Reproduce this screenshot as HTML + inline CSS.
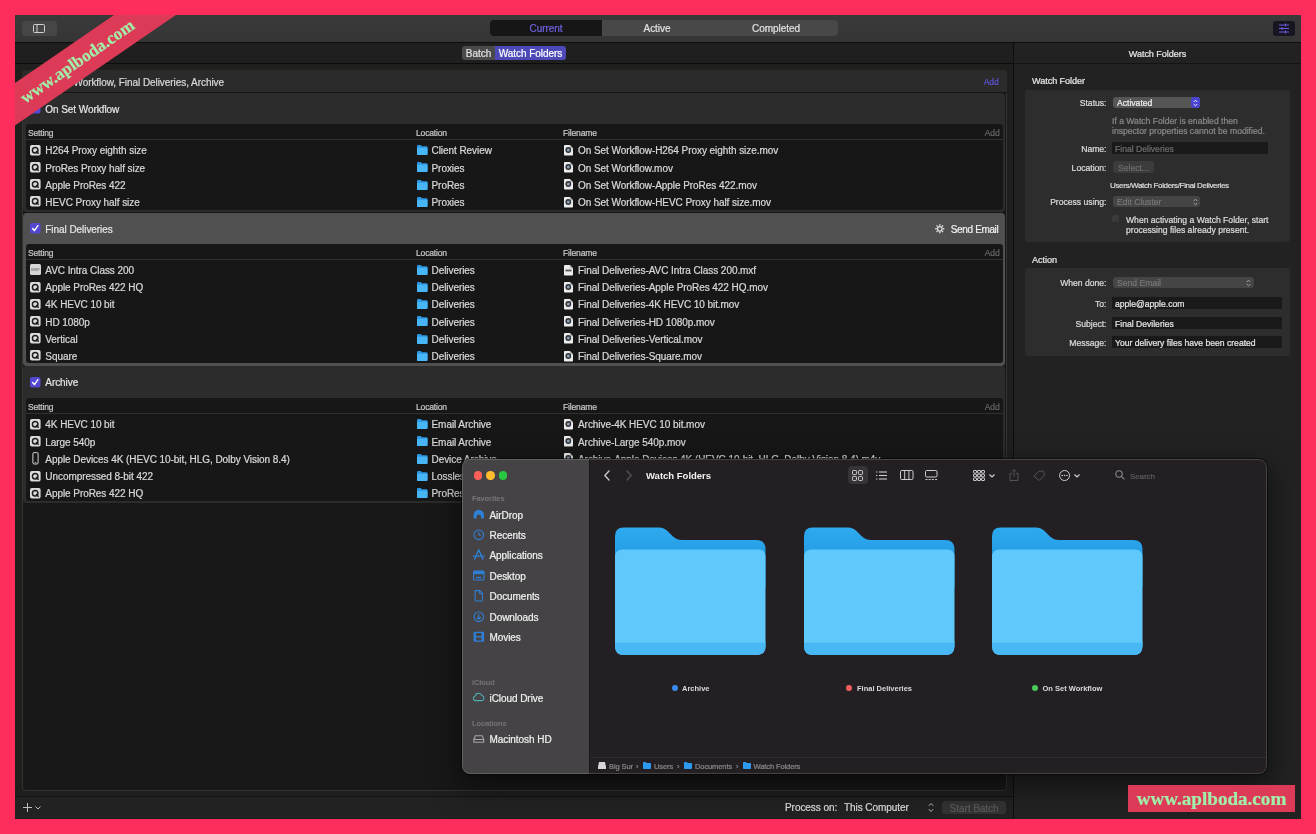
<!DOCTYPE html>
<html><head><meta charset="utf-8"><title>Watch Folders</title>
<style>
html,body{margin:0;padding:0}
body{width:1316px;height:834px;overflow:hidden;position:relative;background:#ff2d5b;font-family:"Liberation Sans",sans-serif;font-size:10px;letter-spacing:-0.06px;color:#d8d8d8;-webkit-text-stroke:0.22px}
.a{position:absolute;white-space:nowrap}
.t{position:absolute;white-space:nowrap;line-height:14px;height:14px;margin-top:1.3px}
.sm{font-size:8.6px;letter-spacing:0;margin-top:0.6px}
.hd{font-size:8.5px;letter-spacing:-0.15px;color:#c8c8c8}
svg{position:absolute;overflow:visible}
</style></head><body>
<div style="position:absolute;left:0;top:0;width:1316px;height:834px;will-change:transform">

<div class="a" style="left:15px;top:15px;width:1286px;height:803.5px;background:#1f1f1f"></div>
<div class="a" style="left:15px;top:15px;width:1286px;height:27px;background:linear-gradient(#3a3a3a,#353535)"></div>
<div class="a" style="left:15px;top:42px;width:1286px;height:1px;background:#0e0e0e"></div>
<div class="a" style="left:15px;top:43px;width:1286px;height:20px;background:#1f1f1f"></div>
<div class="a" style="left:15px;top:63px;width:1286px;height:1px;background:#0c0c0c"></div>
<div class="a" style="left:22px;top:21px;width:35px;height:15px;background:#464646;border-radius:3px"></div>
<svg style="left:33px;top:24px" width="12" height="9" viewBox="0 0 12 9"><rect x="0.5" y="0.5" width="11" height="8" rx="1" fill="none" stroke="#d0d0d0" stroke-width="1"/><line x1="4" y1="0.5" x2="4" y2="8.5" stroke="#d0d0d0" stroke-width="1"/></svg>
<div class="a" style="left:490px;top:20px;width:348px;height:16px;background:#484848;border-radius:4px"></div>
<div class="a" style="left:490px;top:20px;width:112px;height:16px;background:#161616;border-radius:4px 0 0 4px"></div>
<div class="t" style="left:490px;top:21px;width:112px;text-align:center;color:#6e62e0">Current</div>
<div class="t" style="left:602px;top:21px;width:110px;text-align:center;color:#e0e0e0">Active</div>
<div class="t" style="left:716px;top:21px;width:120px;text-align:center;color:#e0e0e0">Completed</div>
<div class="a" style="left:1273px;top:21px;width:22px;height:15px;background:#17151f;border-radius:3px"></div>
<svg style="left:1279px;top:23px" width="10" height="11" viewBox="0 0 10 11"><g stroke="#6a5fe0" stroke-width="1" fill="none"><line x1="0" y1="2" x2="10" y2="2"/><line x1="0" y1="5.5" x2="10" y2="5.5"/><line x1="0" y1="9" x2="10" y2="9"/><line x1="6.5" y1="0.5" x2="6.5" y2="3.5"/><line x1="3" y1="4" x2="3" y2="7"/><line x1="6.5" y1="7.5" x2="6.5" y2="10.5"/></g></svg>
<div class="a" style="left:462px;top:46px;width:34px;height:14px;background:#4a4a4a;border-radius:3px 0 0 3px"></div>
<div class="a" style="left:495px;top:46px;width:71px;height:14px;background:#4d49b8;border-radius:0 3px 3px 0"></div>
<div class="t" style="left:462px;top:46px;width:33px;text-align:center;color:#e0e0e0">Batch</div>
<div class="t" style="left:495px;top:46px;width:71px;text-align:center;color:#ffffff">Watch Folders</div>
<div class="a" style="left:15px;top:64px;width:998px;height:733px;background:#1f201e"></div>
<div class="a" style="left:21.5px;top:70px;width:985.5px;height:721px;background:#181818;border:1px solid #343434;box-sizing:border-box;border-radius:4px"></div>
<div class="a" style="left:22px;top:70px;width:985px;height:22.5px;background:#2b2b2b;border-radius:4px 4px 0 0"></div>
<div class="a" style="left:22px;top:92px;width:985px;height:1px;background:#151515"></div>
<div class="t" style="left:24px;top:74.500px;width:200px;text-align:right;color:#d8d8d8">On Set Workflow, Final Deliveries, Archive</div>
<div class="t hd" style="left:960px;top:73.500px;width:38.500px;text-align:right;color:#5f54d4">Add</div>
<div class="a" style="left:22.5px;top:93px;width:982.2px;height:118.5px;background:#2c2c2c;border-radius:4px"></div>
<svg style="left:30.4px;top:103.25px" width="10.500" height="10.500" viewBox="0 0 9 9"><rect x="0" y="0" width="9" height="9" rx="1.800" fill="#5448d2"/><path d="M2.2 4.7L3.8 6.5L6.8 2.3" fill="none" stroke="#fff" stroke-width="1.2" stroke-linecap="round" stroke-linejoin="round"/></svg>
<div class="t" style="left:45.3px;top:101.5px;color:#e4e4e4">On Set Workflow</div>

<div class="a" style="left:25.5px;top:124px;width:977.5px;height:85.5px;background:#171717;border-radius:3px"></div>
<div class="t hd" style="left:28px;top:124.3px">Setting</div>
<div class="t hd" style="left:416px;top:124.3px">Location</div>
<div class="t hd" style="left:563px;top:124.3px">Filename</div>
<div class="t hd" style="left:960px;top:124.3px;width:39.5px;text-align:right;color:#646464">Add</div>
<div class="a" style="left:25.5px;top:139.3px;width:977.5px;height:1px;background:#303030"></div>
<svg style="left:29.9px;top:144.79999999999998px" width="10.600" height="10.600" viewBox="0 0 11 11"><rect x="0" y="0" width="11" height="11" rx="1.800" fill="#dcdcdc"/><circle cx="5.4" cy="5.4" r="2.9" fill="none" stroke="#1c1c1c" stroke-width="1.5"/><line x1="6.3" y1="6.3" x2="9" y2="9" stroke="#1c1c1c" stroke-width="1.5"/></svg>
<div class="t" style="left:45.3px;top:143.1px">H264 Proxy eighth size</div>
<svg style="left:416.7px;top:145.1px" width="10.5" height="10" viewBox="0 0 10.5 10"><path d="M0 1Q0 0 1 0H3.8L4.9 1.2H9.5Q10.5 1.2 10.5 2.2V9Q10.5 10 9.5 10H1Q0 10 0 9Z" fill="#2a96e4"/><path d="M0 2.8H10.5V9Q10.5 10 9.5 10H1Q0 10 0 9Z" fill="#48b6f6"/></svg>
<div class="t" style="left:431.5px;top:143.1px">Client Review</div>
<svg style="left:564.3px;top:144.9px" width="9" height="10.5" viewBox="0 0 9 10.5"><path d="M0 0.800Q0 0 0.800 0H5.800L9 3.200V9.700Q9 10.500 8.200 10.500H0.800Q0 10.500 0 9.700Z" fill="#ececec"/><path d="M5.800 0V3.200H9Z" fill="#b9b9b9"/><circle cx="4.300" cy="5" r="2.900" fill="#2e3236"/><circle cx="4.300" cy="5" r="1.500" fill="#8fa2b4"/></svg>
<div class="t" style="left:578px;top:143.1px">On Set Workflow-H264 Proxy eighth size.mov</div>
<svg style="left:29.9px;top:162.0px" width="10.600" height="10.600" viewBox="0 0 11 11"><rect x="0" y="0" width="11" height="11" rx="1.800" fill="#dcdcdc"/><circle cx="5.4" cy="5.4" r="2.9" fill="none" stroke="#1c1c1c" stroke-width="1.5"/><line x1="6.3" y1="6.3" x2="9" y2="9" stroke="#1c1c1c" stroke-width="1.5"/></svg>
<div class="t" style="left:45.3px;top:160.3px">ProRes Proxy half size</div>
<svg style="left:416.7px;top:162.3px" width="10.5" height="10" viewBox="0 0 10.5 10"><path d="M0 1Q0 0 1 0H3.8L4.9 1.2H9.5Q10.5 1.2 10.5 2.2V9Q10.5 10 9.5 10H1Q0 10 0 9Z" fill="#2a96e4"/><path d="M0 2.8H10.5V9Q10.5 10 9.5 10H1Q0 10 0 9Z" fill="#48b6f6"/></svg>
<div class="t" style="left:431.5px;top:160.3px">Proxies</div>
<svg style="left:564.3px;top:162.10000000000002px" width="9" height="10.5" viewBox="0 0 9 10.5"><path d="M0 0.800Q0 0 0.800 0H5.800L9 3.200V9.700Q9 10.500 8.200 10.500H0.800Q0 10.500 0 9.700Z" fill="#ececec"/><path d="M5.800 0V3.200H9Z" fill="#b9b9b9"/><circle cx="4.300" cy="5" r="2.900" fill="#2e3236"/><circle cx="4.300" cy="5" r="1.500" fill="#8fa2b4"/></svg>
<div class="t" style="left:578px;top:160.3px">On Set Workflow.mov</div>
<svg style="left:29.9px;top:179.2px" width="10.600" height="10.600" viewBox="0 0 11 11"><rect x="0" y="0" width="11" height="11" rx="1.800" fill="#dcdcdc"/><circle cx="5.4" cy="5.4" r="2.9" fill="none" stroke="#1c1c1c" stroke-width="1.5"/><line x1="6.3" y1="6.3" x2="9" y2="9" stroke="#1c1c1c" stroke-width="1.5"/></svg>
<div class="t" style="left:45.3px;top:177.5px">Apple ProRes 422</div>
<svg style="left:416.7px;top:179.5px" width="10.5" height="10" viewBox="0 0 10.5 10"><path d="M0 1Q0 0 1 0H3.8L4.9 1.2H9.5Q10.5 1.2 10.5 2.2V9Q10.5 10 9.5 10H1Q0 10 0 9Z" fill="#2a96e4"/><path d="M0 2.8H10.5V9Q10.5 10 9.5 10H1Q0 10 0 9Z" fill="#48b6f6"/></svg>
<div class="t" style="left:431.5px;top:177.5px">ProRes</div>
<svg style="left:564.3px;top:179.3px" width="9" height="10.5" viewBox="0 0 9 10.5"><path d="M0 0.800Q0 0 0.800 0H5.800L9 3.200V9.700Q9 10.500 8.200 10.500H0.800Q0 10.500 0 9.700Z" fill="#ececec"/><path d="M5.800 0V3.200H9Z" fill="#b9b9b9"/><circle cx="4.300" cy="5" r="2.900" fill="#2e3236"/><circle cx="4.300" cy="5" r="1.500" fill="#8fa2b4"/></svg>
<div class="t" style="left:578px;top:177.5px">On Set Workflow-Apple ProRes 422.mov</div>
<svg style="left:29.9px;top:196.39999999999998px" width="10.600" height="10.600" viewBox="0 0 11 11"><rect x="0" y="0" width="11" height="11" rx="1.800" fill="#dcdcdc"/><circle cx="5.4" cy="5.4" r="2.9" fill="none" stroke="#1c1c1c" stroke-width="1.5"/><line x1="6.3" y1="6.3" x2="9" y2="9" stroke="#1c1c1c" stroke-width="1.5"/></svg>
<div class="t" style="left:45.3px;top:194.7px">HEVC Proxy half size</div>
<svg style="left:416.7px;top:196.7px" width="10.5" height="10" viewBox="0 0 10.5 10"><path d="M0 1Q0 0 1 0H3.8L4.9 1.2H9.5Q10.5 1.2 10.5 2.2V9Q10.5 10 9.5 10H1Q0 10 0 9Z" fill="#2a96e4"/><path d="M0 2.8H10.5V9Q10.5 10 9.5 10H1Q0 10 0 9Z" fill="#48b6f6"/></svg>
<div class="t" style="left:431.5px;top:194.7px">Proxies</div>
<svg style="left:564.3px;top:196.5px" width="9" height="10.5" viewBox="0 0 9 10.5"><path d="M0 0.800Q0 0 0.800 0H5.800L9 3.200V9.700Q9 10.500 8.200 10.500H0.800Q0 10.500 0 9.700Z" fill="#ececec"/><path d="M5.800 0V3.200H9Z" fill="#b9b9b9"/><circle cx="4.300" cy="5" r="2.900" fill="#2e3236"/><circle cx="4.300" cy="5" r="1.500" fill="#8fa2b4"/></svg>
<div class="t" style="left:578px;top:194.7px">On Set Workflow-HEVC Proxy half size.mov</div>
<div class="a" style="left:22.5px;top:213px;width:982.2px;height:152.5px;background:#505050;border-radius:4px"></div>
<svg style="left:30.4px;top:223.35px" width="10.500" height="10.500" viewBox="0 0 9 9"><rect x="0" y="0" width="9" height="9" rx="1.800" fill="#5448d2"/><path d="M2.2 4.7L3.8 6.5L6.8 2.3" fill="none" stroke="#fff" stroke-width="1.2" stroke-linecap="round" stroke-linejoin="round"/></svg>
<div class="t" style="left:45.3px;top:221.6px;color:#e4e4e4">Final Deliveries</div>
<svg style="left:934.7px;top:223.8px" width="9.6" height="9.6" viewBox="0 0 11 11"><g fill="none" stroke="#e0e0e0"><circle cx="5.5" cy="5.5" r="2.6" stroke-width="1.4"/><g stroke-width="1.6"><line x1="5.5" y1="0.3" x2="5.5" y2="2"/><line x1="5.5" y1="9" x2="5.5" y2="10.7"/><line x1="0.3" y1="5.5" x2="2" y2="5.5"/><line x1="9" y1="5.5" x2="10.7" y2="5.5"/><line x1="1.8" y1="1.8" x2="3" y2="3"/><line x1="8" y1="8" x2="9.2" y2="9.2"/><line x1="1.8" y1="9.2" x2="3" y2="8"/><line x1="8" y1="3" x2="9.2" y2="1.8"/></g></g></svg><div class="t" style="left:950.8px;top:222.2px;color:#f0f0f0;letter-spacing:-0.36px">Send Email</div>
<div class="a" style="left:25.5px;top:244.2px;width:977.5px;height:119.30000000000001px;background:#171717;border-radius:3px"></div>
<div class="t hd" style="left:28px;top:244.5px">Setting</div>
<div class="t hd" style="left:416px;top:244.5px">Location</div>
<div class="t hd" style="left:563px;top:244.5px">Filename</div>
<div class="t hd" style="left:960px;top:244.5px;width:39.5px;text-align:right;color:#646464">Add</div>
<div class="a" style="left:25.5px;top:258.7px;width:977.5px;height:1px;background:#303030"></div>
<svg style="left:29.9px;top:264.2px" width="11" height="11" viewBox="0 0 11 11"><rect x="0" y="0" width="11" height="11" rx="1.5" fill="#d6d6d6"/><text x="5.5" y="7.2" font-size="4" font-weight="bold" text-anchor="middle" fill="#777" font-family="Liberation Sans, sans-serif" letter-spacing="0">MXF</text></svg>
<div class="t" style="left:45.3px;top:262.7px">AVC Intra Class 200</div>
<svg style="left:416.7px;top:264.7px" width="10.5" height="10" viewBox="0 0 10.5 10"><path d="M0 1Q0 0 1 0H3.8L4.9 1.2H9.5Q10.5 1.2 10.5 2.2V9Q10.5 10 9.5 10H1Q0 10 0 9Z" fill="#2a96e4"/><path d="M0 2.8H10.5V9Q10.5 10 9.5 10H1Q0 10 0 9Z" fill="#48b6f6"/></svg>
<div class="t" style="left:431.5px;top:262.7px">Deliveries</div>
<svg style="left:564.3px;top:264.5px" width="9" height="10.5" viewBox="0 0 9 10.5"><path d="M0 0.800Q0 0 0.800 0H5.800L9 3.200V9.700Q9 10.500 8.200 10.500H0.800Q0 10.500 0 9.700Z" fill="#ececec"/><path d="M5.800 0V3.200H9Z" fill="#b9b9b9"/><rect x="1.500" y="4.600" width="6" height="1.800" fill="#555"/></svg>
<div class="t" style="left:578px;top:262.7px">Final Deliveries-AVC Intra Class 200.mxf</div>
<svg style="left:29.9px;top:281.59999999999997px" width="10.600" height="10.600" viewBox="0 0 11 11"><rect x="0" y="0" width="11" height="11" rx="1.800" fill="#dcdcdc"/><circle cx="5.4" cy="5.4" r="2.9" fill="none" stroke="#1c1c1c" stroke-width="1.5"/><line x1="6.3" y1="6.3" x2="9" y2="9" stroke="#1c1c1c" stroke-width="1.5"/></svg>
<div class="t" style="left:45.3px;top:279.9px">Apple ProRes 422 HQ</div>
<svg style="left:416.7px;top:281.9px" width="10.5" height="10" viewBox="0 0 10.5 10"><path d="M0 1Q0 0 1 0H3.8L4.9 1.2H9.5Q10.5 1.2 10.5 2.2V9Q10.5 10 9.5 10H1Q0 10 0 9Z" fill="#2a96e4"/><path d="M0 2.8H10.5V9Q10.5 10 9.5 10H1Q0 10 0 9Z" fill="#48b6f6"/></svg>
<div class="t" style="left:431.5px;top:279.9px">Deliveries</div>
<svg style="left:564.3px;top:281.7px" width="9" height="10.5" viewBox="0 0 9 10.5"><path d="M0 0.800Q0 0 0.800 0H5.800L9 3.200V9.700Q9 10.500 8.200 10.500H0.800Q0 10.500 0 9.700Z" fill="#ececec"/><path d="M5.800 0V3.200H9Z" fill="#b9b9b9"/><circle cx="4.300" cy="5" r="2.900" fill="#2e3236"/><circle cx="4.300" cy="5" r="1.500" fill="#8fa2b4"/></svg>
<div class="t" style="left:578px;top:279.9px">Final Deliveries-Apple ProRes 422 HQ.mov</div>
<svg style="left:29.9px;top:298.8px" width="10.600" height="10.600" viewBox="0 0 11 11"><rect x="0" y="0" width="11" height="11" rx="1.800" fill="#dcdcdc"/><circle cx="5.4" cy="5.4" r="2.9" fill="none" stroke="#1c1c1c" stroke-width="1.5"/><line x1="6.3" y1="6.3" x2="9" y2="9" stroke="#1c1c1c" stroke-width="1.5"/></svg>
<div class="t" style="left:45.3px;top:297.1px">4K HEVC 10 bit</div>
<svg style="left:416.7px;top:299.1px" width="10.5" height="10" viewBox="0 0 10.5 10"><path d="M0 1Q0 0 1 0H3.8L4.9 1.2H9.5Q10.5 1.2 10.5 2.2V9Q10.5 10 9.5 10H1Q0 10 0 9Z" fill="#2a96e4"/><path d="M0 2.8H10.5V9Q10.5 10 9.5 10H1Q0 10 0 9Z" fill="#48b6f6"/></svg>
<div class="t" style="left:431.5px;top:297.1px">Deliveries</div>
<svg style="left:564.3px;top:298.90000000000003px" width="9" height="10.5" viewBox="0 0 9 10.5"><path d="M0 0.800Q0 0 0.800 0H5.800L9 3.200V9.700Q9 10.500 8.200 10.500H0.800Q0 10.500 0 9.700Z" fill="#ececec"/><path d="M5.800 0V3.200H9Z" fill="#b9b9b9"/><circle cx="4.300" cy="5" r="2.900" fill="#2e3236"/><circle cx="4.300" cy="5" r="1.500" fill="#8fa2b4"/></svg>
<div class="t" style="left:578px;top:297.1px">Final Deliveries-4K HEVC 10 bit.mov</div>
<svg style="left:29.9px;top:316.0px" width="10.600" height="10.600" viewBox="0 0 11 11"><rect x="0" y="0" width="11" height="11" rx="1.800" fill="#dcdcdc"/><circle cx="5.4" cy="5.4" r="2.9" fill="none" stroke="#1c1c1c" stroke-width="1.5"/><line x1="6.3" y1="6.3" x2="9" y2="9" stroke="#1c1c1c" stroke-width="1.5"/></svg>
<div class="t" style="left:45.3px;top:314.3px">HD 1080p</div>
<svg style="left:416.7px;top:316.3px" width="10.5" height="10" viewBox="0 0 10.5 10"><path d="M0 1Q0 0 1 0H3.8L4.9 1.2H9.5Q10.5 1.2 10.5 2.2V9Q10.5 10 9.5 10H1Q0 10 0 9Z" fill="#2a96e4"/><path d="M0 2.8H10.5V9Q10.5 10 9.5 10H1Q0 10 0 9Z" fill="#48b6f6"/></svg>
<div class="t" style="left:431.5px;top:314.3px">Deliveries</div>
<svg style="left:564.3px;top:316.1px" width="9" height="10.5" viewBox="0 0 9 10.5"><path d="M0 0.800Q0 0 0.800 0H5.800L9 3.200V9.700Q9 10.500 8.200 10.500H0.800Q0 10.500 0 9.700Z" fill="#ececec"/><path d="M5.800 0V3.200H9Z" fill="#b9b9b9"/><circle cx="4.300" cy="5" r="2.900" fill="#2e3236"/><circle cx="4.300" cy="5" r="1.500" fill="#8fa2b4"/></svg>
<div class="t" style="left:578px;top:314.3px">Final Deliveries-HD 1080p.mov</div>
<svg style="left:29.9px;top:333.2px" width="10.600" height="10.600" viewBox="0 0 11 11"><rect x="0" y="0" width="11" height="11" rx="1.800" fill="#dcdcdc"/><circle cx="5.4" cy="5.4" r="2.9" fill="none" stroke="#1c1c1c" stroke-width="1.5"/><line x1="6.3" y1="6.3" x2="9" y2="9" stroke="#1c1c1c" stroke-width="1.5"/></svg>
<div class="t" style="left:45.3px;top:331.5px">Vertical</div>
<svg style="left:416.7px;top:333.5px" width="10.5" height="10" viewBox="0 0 10.5 10"><path d="M0 1Q0 0 1 0H3.8L4.9 1.2H9.5Q10.5 1.2 10.5 2.2V9Q10.5 10 9.5 10H1Q0 10 0 9Z" fill="#2a96e4"/><path d="M0 2.8H10.5V9Q10.5 10 9.5 10H1Q0 10 0 9Z" fill="#48b6f6"/></svg>
<div class="t" style="left:431.5px;top:331.5px">Deliveries</div>
<svg style="left:564.3px;top:333.3px" width="9" height="10.5" viewBox="0 0 9 10.5"><path d="M0 0.800Q0 0 0.800 0H5.800L9 3.200V9.700Q9 10.500 8.200 10.500H0.800Q0 10.500 0 9.700Z" fill="#ececec"/><path d="M5.800 0V3.200H9Z" fill="#b9b9b9"/><circle cx="4.300" cy="5" r="2.900" fill="#2e3236"/><circle cx="4.300" cy="5" r="1.500" fill="#8fa2b4"/></svg>
<div class="t" style="left:578px;top:331.5px">Final Deliveries-Vertical.mov</div>
<svg style="left:29.9px;top:350.4px" width="10.600" height="10.600" viewBox="0 0 11 11"><rect x="0" y="0" width="11" height="11" rx="1.800" fill="#dcdcdc"/><circle cx="5.4" cy="5.4" r="2.9" fill="none" stroke="#1c1c1c" stroke-width="1.5"/><line x1="6.3" y1="6.3" x2="9" y2="9" stroke="#1c1c1c" stroke-width="1.5"/></svg>
<div class="t" style="left:45.3px;top:348.7px">Square</div>
<svg style="left:416.7px;top:350.7px" width="10.5" height="10" viewBox="0 0 10.5 10"><path d="M0 1Q0 0 1 0H3.8L4.9 1.2H9.5Q10.5 1.2 10.5 2.2V9Q10.5 10 9.5 10H1Q0 10 0 9Z" fill="#2a96e4"/><path d="M0 2.8H10.5V9Q10.5 10 9.5 10H1Q0 10 0 9Z" fill="#48b6f6"/></svg>
<div class="t" style="left:431.5px;top:348.7px">Deliveries</div>
<svg style="left:564.3px;top:350.5px" width="9" height="10.5" viewBox="0 0 9 10.5"><path d="M0 0.800Q0 0 0.800 0H5.800L9 3.200V9.700Q9 10.500 8.200 10.500H0.800Q0 10.500 0 9.700Z" fill="#ececec"/><path d="M5.800 0V3.200H9Z" fill="#b9b9b9"/><circle cx="4.300" cy="5" r="2.900" fill="#2e3236"/><circle cx="4.300" cy="5" r="1.500" fill="#8fa2b4"/></svg>
<div class="t" style="left:578px;top:348.7px">Final Deliveries-Square.mov</div>
<div class="a" style="left:22.5px;top:366px;width:982.2px;height:137px;background:#2c2c2c;border-radius:4px"></div>
<svg style="left:30.4px;top:376.9px" width="10.500" height="10.500" viewBox="0 0 9 9"><rect x="0" y="0" width="9" height="9" rx="1.800" fill="#5448d2"/><path d="M2.2 4.7L3.8 6.5L6.8 2.3" fill="none" stroke="#fff" stroke-width="1.2" stroke-linecap="round" stroke-linejoin="round"/></svg>
<div class="t" style="left:45.3px;top:375.15px;color:#e4e4e4">Archive</div>

<div class="a" style="left:25.5px;top:398.3px;width:977.5px;height:102.69999999999999px;background:#171717;border-radius:3px"></div>
<div class="t hd" style="left:28px;top:398.6px">Setting</div>
<div class="t hd" style="left:416px;top:398.6px">Location</div>
<div class="t hd" style="left:563px;top:398.6px">Filename</div>
<div class="t hd" style="left:960px;top:398.6px;width:39.5px;text-align:right;color:#646464">Add</div>
<div class="a" style="left:25.5px;top:413.2px;width:977.5px;height:1px;background:#303030"></div>
<svg style="left:29.9px;top:418.9px" width="10.600" height="10.600" viewBox="0 0 11 11"><rect x="0" y="0" width="11" height="11" rx="1.800" fill="#dcdcdc"/><circle cx="5.4" cy="5.4" r="2.9" fill="none" stroke="#1c1c1c" stroke-width="1.5"/><line x1="6.3" y1="6.3" x2="9" y2="9" stroke="#1c1c1c" stroke-width="1.5"/></svg>
<div class="t" style="left:45.3px;top:417.2px">4K HEVC 10 bit</div>
<svg style="left:416.7px;top:419.2px" width="10.5" height="10" viewBox="0 0 10.5 10"><path d="M0 1Q0 0 1 0H3.8L4.9 1.2H9.5Q10.5 1.2 10.5 2.2V9Q10.5 10 9.5 10H1Q0 10 0 9Z" fill="#2a96e4"/><path d="M0 2.8H10.5V9Q10.5 10 9.5 10H1Q0 10 0 9Z" fill="#48b6f6"/></svg>
<div class="t" style="left:431.5px;top:417.2px">Email Archive</div>
<svg style="left:564.3px;top:419.0px" width="9" height="10.5" viewBox="0 0 9 10.5"><path d="M0 0.800Q0 0 0.800 0H5.800L9 3.200V9.700Q9 10.500 8.200 10.500H0.800Q0 10.500 0 9.700Z" fill="#ececec"/><path d="M5.800 0V3.200H9Z" fill="#b9b9b9"/><circle cx="4.300" cy="5" r="2.900" fill="#2e3236"/><circle cx="4.300" cy="5" r="1.500" fill="#8fa2b4"/></svg>
<div class="t" style="left:578px;top:417.2px">Archive-4K HEVC 10 bit.mov</div>
<svg style="left:29.9px;top:436.09999999999997px" width="10.600" height="10.600" viewBox="0 0 11 11"><rect x="0" y="0" width="11" height="11" rx="1.800" fill="#dcdcdc"/><circle cx="5.4" cy="5.4" r="2.9" fill="none" stroke="#1c1c1c" stroke-width="1.5"/><line x1="6.3" y1="6.3" x2="9" y2="9" stroke="#1c1c1c" stroke-width="1.5"/></svg>
<div class="t" style="left:45.3px;top:434.4px">Large 540p</div>
<svg style="left:416.7px;top:436.4px" width="10.5" height="10" viewBox="0 0 10.5 10"><path d="M0 1Q0 0 1 0H3.8L4.9 1.2H9.5Q10.5 1.2 10.5 2.2V9Q10.5 10 9.5 10H1Q0 10 0 9Z" fill="#2a96e4"/><path d="M0 2.8H10.5V9Q10.5 10 9.5 10H1Q0 10 0 9Z" fill="#48b6f6"/></svg>
<div class="t" style="left:431.5px;top:434.4px">Email Archive</div>
<svg style="left:564.3px;top:436.2px" width="9" height="10.5" viewBox="0 0 9 10.5"><path d="M0 0.800Q0 0 0.800 0H5.800L9 3.200V9.700Q9 10.500 8.200 10.500H0.800Q0 10.500 0 9.700Z" fill="#ececec"/><path d="M5.800 0V3.200H9Z" fill="#b9b9b9"/><circle cx="4.300" cy="5" r="2.900" fill="#2e3236"/><circle cx="4.300" cy="5" r="1.500" fill="#8fa2b4"/></svg>
<div class="t" style="left:578px;top:434.4px">Archive-Large 540p.mov</div>
<svg style="left:29.9px;top:452.1px" width="11" height="13" viewBox="0 0 11 13"><rect x="2.900" y="0.600" width="5.200" height="11.400" rx="1.200" fill="none" stroke="#d4d4d4" stroke-width="1"/><line x1="4.500" y1="10.600" x2="6.500" y2="10.600" stroke="#d4d4d4" stroke-width="0.800"/></svg>
<div class="t" style="left:45.3px;top:451.6px">Apple Devices 4K (HEVC 10-bit, HLG, Dolby Vision 8.4)</div>
<svg style="left:416.7px;top:453.6px" width="10.5" height="10" viewBox="0 0 10.5 10"><path d="M0 1Q0 0 1 0H3.8L4.9 1.2H9.5Q10.5 1.2 10.5 2.2V9Q10.5 10 9.5 10H1Q0 10 0 9Z" fill="#2a96e4"/><path d="M0 2.8H10.5V9Q10.5 10 9.5 10H1Q0 10 0 9Z" fill="#48b6f6"/></svg>
<div class="t" style="left:431.5px;top:451.6px">Device Archive</div>
<svg style="left:564.3px;top:453.40000000000003px" width="9" height="10.5" viewBox="0 0 9 10.5"><path d="M0 0.800Q0 0 0.800 0H5.800L9 3.200V9.700Q9 10.500 8.200 10.500H0.800Q0 10.500 0 9.700Z" fill="#ececec"/><path d="M5.800 0V3.200H9Z" fill="#b9b9b9"/><circle cx="4.300" cy="5" r="2.900" fill="#2e3236"/><circle cx="4.300" cy="5" r="1.500" fill="#8fa2b4"/></svg>
<div class="t" style="left:578px;top:451.6px">Archive-Apple Devices 4K (HEVC 10-bit, HLG, Dolby Vision 8.4).m4v</div>
<svg style="left:29.9px;top:470.5px" width="10.600" height="10.600" viewBox="0 0 11 11"><rect x="0" y="0" width="11" height="11" rx="1.800" fill="#dcdcdc"/><circle cx="5.4" cy="5.4" r="2.9" fill="none" stroke="#1c1c1c" stroke-width="1.5"/><line x1="6.3" y1="6.3" x2="9" y2="9" stroke="#1c1c1c" stroke-width="1.5"/></svg>
<div class="t" style="left:45.3px;top:468.8px">Uncompressed 8-bit 422</div>
<svg style="left:416.7px;top:470.8px" width="10.5" height="10" viewBox="0 0 10.5 10"><path d="M0 1Q0 0 1 0H3.8L4.9 1.2H9.5Q10.5 1.2 10.5 2.2V9Q10.5 10 9.5 10H1Q0 10 0 9Z" fill="#2a96e4"/><path d="M0 2.8H10.5V9Q10.5 10 9.5 10H1Q0 10 0 9Z" fill="#48b6f6"/></svg>
<div class="t" style="left:431.5px;top:468.8px">Lossless Archive</div>
<svg style="left:564.3px;top:470.6px" width="9" height="10.5" viewBox="0 0 9 10.5"><path d="M0 0.800Q0 0 0.800 0H5.800L9 3.200V9.700Q9 10.500 8.200 10.500H0.800Q0 10.500 0 9.700Z" fill="#ececec"/><path d="M5.800 0V3.200H9Z" fill="#b9b9b9"/><circle cx="4.300" cy="5" r="2.900" fill="#2e3236"/><circle cx="4.300" cy="5" r="1.500" fill="#8fa2b4"/></svg>
<div class="t" style="left:578px;top:468.8px">Archive-Uncompressed 8-bit 422.mov</div>
<svg style="left:29.9px;top:487.7px" width="10.600" height="10.600" viewBox="0 0 11 11"><rect x="0" y="0" width="11" height="11" rx="1.800" fill="#dcdcdc"/><circle cx="5.4" cy="5.4" r="2.9" fill="none" stroke="#1c1c1c" stroke-width="1.5"/><line x1="6.3" y1="6.3" x2="9" y2="9" stroke="#1c1c1c" stroke-width="1.5"/></svg>
<div class="t" style="left:45.3px;top:486px">Apple ProRes 422 HQ</div>
<svg style="left:416.7px;top:488px" width="10.5" height="10" viewBox="0 0 10.5 10"><path d="M0 1Q0 0 1 0H3.8L4.9 1.2H9.5Q10.5 1.2 10.5 2.2V9Q10.5 10 9.5 10H1Q0 10 0 9Z" fill="#2a96e4"/><path d="M0 2.8H10.5V9Q10.5 10 9.5 10H1Q0 10 0 9Z" fill="#48b6f6"/></svg>
<div class="t" style="left:431.5px;top:486px">ProRes Archive</div>
<svg style="left:564.3px;top:487.8px" width="9" height="10.5" viewBox="0 0 9 10.5"><path d="M0 0.800Q0 0 0.800 0H5.800L9 3.200V9.700Q9 10.500 8.200 10.500H0.800Q0 10.500 0 9.700Z" fill="#ececec"/><path d="M5.800 0V3.200H9Z" fill="#b9b9b9"/><circle cx="4.300" cy="5" r="2.900" fill="#2e3236"/><circle cx="4.300" cy="5" r="1.500" fill="#8fa2b4"/></svg>
<div class="t" style="left:578px;top:486px">Archive-Apple ProRes 422 HQ.mov</div>
<div class="a" style="left:15px;top:797px;width:1286px;height:21px;background:#222222"></div>
<div class="a" style="left:15px;top:796px;width:997px;height:1px;background:#111"></div>
<svg style="left:23px;top:803px" width="20" height="9" viewBox="0 0 20 9"><g stroke="#bdbdbd" stroke-width="1" fill="none"><line x1="0" y1="4.5" x2="9" y2="4.5"/><line x1="4.5" y1="0" x2="4.5" y2="9"/><path d="M12.5 3.5L15 6L17.5 3.5"/></g></svg>
<div class="t" style="left:785px;top:800px;color:#dcdcdc">Process on:</div>
<div class="t" style="left:844px;top:800px;color:#dcdcdc">This Computer</div>
<svg style="left:928px;top:802px" width="6" height="11" viewBox="0 0 6 11"><g stroke="#bdbdbd" stroke-width="1" fill="none"><path d="M0.8 3.8L3 1.5L5.2 3.8"/><path d="M0.8 7.2L3 9.5L5.2 7.2"/></g></svg>
<div class="a" style="left:942px;top:801px;width:64px;height:13px;background:#333333;border-radius:3px"></div>
<div class="t" style="left:942px;top:801px;width:64px;text-align:center;color:#5c5c5c">Start Batch</div>
<div class="a" style="left:1013px;top:43px;width:1px;height:775px;background:#0e0e0e"></div>
<div class="a" style="left:1014px;top:43px;width:287px;height:775.5px;background:#222222"></div>
<div class="a" style="left:1013px;top:63px;width:288px;height:1px;background:#141414"></div>
<div class="t" style="left:1014px;top:45.6px;width:287px;text-align:center;color:#e6e6e6;font-size:9.1px">Watch Folders</div>
<div class="t" style="left:1032px;top:72.8px;color:#e6e6e6;font-size:9.1px">Watch Folder</div>
<div class="a" style="left:1025px;top:90px;width:265px;height:152px;background:#2d2d2d;border-radius:3px"></div>
<div class="t" style="left:1032px;top:251.3px;color:#e6e6e6;font-size:9.1px">Action</div>
<div class="a" style="left:1025px;top:268px;width:265px;height:88px;background:#2d2d2d;border-radius:3px"></div>
<div class="t sm" style="left:1026px;width:80.500px;text-align:right;top:95px;color:#dcdcdc">Status:</div>
<div class="a" style="left:1113px;top:97px;width:87px;height:11px;background:#555555;border-radius:3px"></div>
<div class="a" style="left:1191px;top:97px;width:9px;height:11px;background:#4a45d0;border-radius:3px"></div>
<svg style="left:1193px;top:98.5px" width="5" height="8" viewBox="0 0 5 8"><g stroke="#fff" stroke-width="0.9" fill="none"><path d="M0.7 3L2.5 1.2L4.3 3"/><path d="M0.7 5L2.5 6.8L4.3 5"/></g></svg>
<div class="t sm" style="left:1117px;top:95px;color:#f0f0f0">Activated</div>
<div class="t sm" style="left:1112px;top:113px;color:#8a8a8a">If a Watch Folder is enabled then</div>
<div class="t sm" style="left:1112px;top:123px;color:#8a8a8a">inspector properties cannot be modified.</div>
<div class="t sm" style="left:1026px;width:80.500px;text-align:right;top:141px;color:#dcdcdc">Name:</div>
<div class="a" style="left:1112px;top:142px;width:156px;height:12px;background:#191919"></div>
<div class="t sm" style="left:1115px;top:141px;color:#6e6e6e">Final Deliveries</div>
<div class="t sm" style="left:1026px;width:80.500px;text-align:right;top:160px;color:#dcdcdc">Location:</div>
<div class="a" style="left:1113px;top:161px;width:41px;height:12px;background:#3c3c3c;border-radius:3px"></div>
<div class="t sm" style="left:1113px;top:160px;width:41px;text-align:center;color:#6e6e6e">Select...</div>
<div class="t sm" style="left:1110px;top:178px;color:#dcdcdc;font-size:8px;letter-spacing:-0.35px">Users/Watch Folders/Final Deliveries</div>
<div class="t sm" style="left:1026px;width:80.500px;text-align:right;top:194px;color:#dcdcdc">Process using:</div>
<div class="a" style="left:1113px;top:196px;width:87px;height:11px;background:#454545;border-radius:3px"></div>
<svg style="left:1193px;top:197.5px" width="5" height="8" viewBox="0 0 5 8"><g stroke="#b0b0b0" stroke-width="0.9" fill="none"><path d="M0.7 3L2.5 1.2L4.3 3"/><path d="M0.7 5L2.5 6.8L4.3 5"/></g></svg>
<div class="t sm" style="left:1117px;top:194px;color:#777">Edit Cluster</div>
<div class="a" style="left:1112px;top:215px;width:7px;height:7px;background:#3a3a3a;border-radius:1.5px"></div>
<div class="t sm" style="left:1126px;top:212px;color:#dcdcdc">When activating a Watch Folder, start</div>
<div class="t sm" style="left:1126px;top:222px;color:#dcdcdc">processing files already present.</div>
<div class="t sm" style="left:1026px;width:80.500px;text-align:right;top:275px;color:#dcdcdc">When done:</div>
<div class="a" style="left:1113px;top:277px;width:141px;height:11px;background:#454545;border-radius:3px"></div>
<svg style="left:1246px;top:278.5px" width="5" height="8" viewBox="0 0 5 8"><g stroke="#b0b0b0" stroke-width="0.9" fill="none"><path d="M0.7 3L2.5 1.2L4.3 3"/><path d="M0.7 5L2.5 6.8L4.3 5"/></g></svg>
<div class="t sm" style="left:1117px;top:275.3px;color:#777">Send Email</div>
<div class="t sm" style="left:1026px;width:80.500px;text-align:right;top:296px;color:#dcdcdc">To:</div>
<div class="a" style="left:1112px;top:297px;width:170px;height:12px;background:#1a1a1a"></div>
<div class="t sm" style="left:1115px;top:296px;color:#e6e6e6">apple@apple.com</div>
<div class="t sm" style="left:1026px;width:80.500px;text-align:right;top:316px;color:#dcdcdc">Subject:</div>
<div class="a" style="left:1112px;top:317px;width:170px;height:12px;background:#1a1a1a"></div>
<div class="t sm" style="left:1115px;top:316px;color:#e6e6e6">Final Devileries</div>
<div class="t sm" style="left:1026px;width:80.500px;text-align:right;top:335px;color:#dcdcdc">Message:</div>
<div class="a" style="left:1112px;top:336px;width:170px;height:12px;background:#1a1a1a"></div>
<div class="t sm" style="left:1115px;top:335px;color:#e6e6e6">Your delivery files have been created</div>
<div class="a" style="left:15px;top:15px;width:1286px;height:803.5px;overflow:hidden;pointer-events:none">
<div class="a" style="left:447px;top:444px;width:805px;height:315px;border-radius:8px;background:#231f22;box-shadow:0 10px 30px 2px rgba(0,0,0,0.55),0 0 0 1px rgba(0,0,0,0.5);overflow:hidden">
<div class="a" style="left:0;top:0;width:127px;height:315px;background:#454345"></div>
<div class="a" style="left:127px;top:0;width:1px;height:315px;background:#1a171a"></div>
<div class="a" style="left:128px;top:298px;width:677px;height:1px;background:#2f2b2e"></div>
<div class="a" style="left:0;top:0;width:803px;height:313px;border:1px solid rgba(255,255,255,0.16);border-radius:8px"></div>
</div>
</div>
<div class="a" style="left:473.8px;top:471.3px;width:8.4px;height:8.4px;border-radius:50%;background:#fe5f57"></div>
<div class="a" style="left:486.40000000000003px;top:471.3px;width:8.4px;height:8.4px;border-radius:50%;background:#febc2e"></div>
<div class="a" style="left:499.0px;top:471.3px;width:8.4px;height:8.4px;border-radius:50%;background:#28c840"></div>
<div class="t" style="left:472px;top:491px;font-size:7.5px;font-weight:bold;-webkit-text-stroke:0;letter-spacing:-0.1px;color:#777477">Favorites</div>
<div class="t" style="left:472px;top:675px;font-size:7.5px;font-weight:bold;-webkit-text-stroke:0;letter-spacing:-0.1px;color:#777477">iCloud</div>
<div class="t" style="left:472px;top:715.5px;font-size:7.5px;font-weight:bold;-webkit-text-stroke:0;letter-spacing:-0.1px;color:#777477">Locations</div>
<svg style="left:473.200px;top:508.59999999999997px" width="11.600" height="11.600" viewBox="0 0 11 11"><path d="M0.6 9V5.5A4.9 4.9 0 0 1 10.4 5.5V9H7.6V7.2A2.1 2.1 0 0 0 3.4 7.2V9Z" fill="#2e80d6"/></svg>
<div class="t" style="left:489.5px;top:507.4px;color:#f0f0f0">AirDrop</div>
<svg style="left:473.200px;top:529.0px" width="11.600" height="11.600" viewBox="0 0 11 11"><circle cx="5.5" cy="5.5" r="4.6" fill="none" stroke="#2e80d6" stroke-width="1"/><path d="M5.5 2.6V5.7H7.8" fill="none" stroke="#2e80d6" stroke-width="1"/></svg>
<div class="t" style="left:489.5px;top:527.8px;color:#f0f0f0">Recents</div>
<svg style="left:473.200px;top:549.4000000000001px" width="11.600" height="11.600" viewBox="0 0 11 11"><path d="M5.5 0.8L1.6 9.6M5.5 0.8L9.4 9.6M0.4 6.8H10.6" fill="none" stroke="#2e80d6" stroke-width="1.3" stroke-linecap="round"/></svg>
<div class="t" style="left:489.5px;top:548.2px;color:#f0f0f0">Applications</div>
<svg style="left:473.200px;top:569.8000000000001px" width="11.600" height="11.600" viewBox="0 0 11 11"><rect x="0.5" y="1" width="10" height="8.5" rx="1" fill="none" stroke="#2e80d6" stroke-width="1"/><rect x="0.5" y="1" width="10" height="3" fill="#2e80d6"/><rect x="3" y="6.5" width="5" height="1.4" fill="#2e80d6"/></svg>
<div class="t" style="left:489.5px;top:568.6px;color:#f0f0f0">Desktop</div>
<svg style="left:473.200px;top:590.2px" width="11.600" height="11.600" viewBox="0 0 11 11"><path d="M2 0.6H6.3L9 3.4V9.6Q9 10.4 8.2 10.4H2.8Q2 10.4 2 9.6Z" fill="none" stroke="#2e80d6" stroke-width="1"/><path d="M6.2 0.8V3.6H8.9" fill="none" stroke="#2e80d6" stroke-width="0.9"/></svg>
<div class="t" style="left:489.5px;top:589px;color:#f0f0f0">Documents</div>
<svg style="left:473.200px;top:610.6px" width="11.600" height="11.600" viewBox="0 0 11 11"><circle cx="5.5" cy="5.5" r="4.6" fill="none" stroke="#2e80d6" stroke-width="1"/><path d="M5.5 2.8V7.6M3.5 5.8L5.5 7.8L7.5 5.8" fill="none" stroke="#2e80d6" stroke-width="1"/></svg>
<div class="t" style="left:489.5px;top:609.4px;color:#f0f0f0">Downloads</div>
<svg style="left:473.200px;top:631.0px" width="11.600" height="11.600" viewBox="0 0 11 11"><rect x="0.5" y="0.8" width="10" height="9.4" rx="1" fill="#2e80d6"/><rect x="2.8" y="2" width="5.4" height="2.8" fill="#454345"/><rect x="2.8" y="6.1" width="5.4" height="2.9" fill="#454345"/></svg>
<div class="t" style="left:489.5px;top:629.8px;color:#f0f0f0">Movies</div>
<svg style="left:473.200px;top:692.4000000000001px" width="11.600" height="11.600" viewBox="0 0 11 11"><path d="M2.8 9.2A2.3 2.3 0 0 1 2.6 4.7A3.3 3.3 0 0 1 8.9 4.3A2.5 2.5 0 0 1 9 9.2Z" fill="none" stroke="#4fb0b8" stroke-width="1" transform="translate(-0.5,-1)"/></svg>
<div class="t" style="left:489.5px;top:691.2px;color:#f0f0f0">iCloud Drive</div>
<svg style="left:473.200px;top:733.4000000000001px" width="11.600" height="11.600" viewBox="0 0 11 11"><path d="M0.8 6.2L2.2 2.6H8.8L10.2 6.2V8.8H0.8ZM0.8 6.2H10.2" fill="none" stroke="#a8a5a8" stroke-width="1"/></svg>
<div class="t" style="left:489.5px;top:732.2px;color:#f0f0f0">Macintosh HD</div>
<svg style="left:603px;top:470px" width="8" height="11" viewBox="0 0 8 11"><path d="M6 1L1.8 5.5L6 10" fill="none" stroke="#cfcccf" stroke-width="1.3" stroke-linecap="round" stroke-linejoin="round"/></svg>
<svg style="left:625px;top:470px" width="8" height="11" viewBox="0 0 8 11"><path d="M2 1L6.2 5.5L2 10" fill="none" stroke="#555255" stroke-width="1.3" stroke-linecap="round" stroke-linejoin="round"/></svg>
<div class="t" style="left:646px;top:468px;font-weight:bold;-webkit-text-stroke:0;font-size:9.5px;letter-spacing:0;color:#f2f2f2">Watch Folders</div>
<div class="a" style="left:847.5px;top:466px;width:20.5px;height:18px;border-radius:4px;background:#373337"></div>
<svg style="left:852px;top:469.5px" width="11" height="11" viewBox="0 0 11 11"><g fill="none" stroke="#cfcccf" stroke-width="1"><rect x="0.5" y="0.5" width="4" height="4" rx="0.8"/><rect x="6.5" y="0.5" width="4" height="4" rx="0.8"/><rect x="0.5" y="6.5" width="4" height="4" rx="0.8"/><rect x="6.5" y="6.5" width="4" height="4" rx="0.8"/></g></svg>
<svg style="left:876px;top:470.5px" width="11" height="9" viewBox="0 0 11 9"><g stroke="#cfcccf" stroke-width="1.1"><line x1="0" y1="1" x2="1.4" y2="1"/><line x1="3" y1="1" x2="11" y2="1"/><line x1="0" y1="4.5" x2="1.4" y2="4.5"/><line x1="3" y1="4.5" x2="11" y2="4.5"/><line x1="0" y1="8" x2="1.4" y2="8"/><line x1="3" y1="8" x2="11" y2="8"/></g></svg>
<svg style="left:900px;top:470px" width="13.5" height="10" viewBox="0 0 13.5 10"><g fill="none" stroke="#cfcccf" stroke-width="1"><rect x="0.5" y="0.5" width="12.5" height="9" rx="1.2"/><line x1="4.7" y1="0.5" x2="4.7" y2="9.5"/><line x1="8.9" y1="0.5" x2="8.9" y2="9.5"/></g></svg>
<svg style="left:924.5px;top:470px" width="12.5" height="10.5" viewBox="0 0 12.5 10.5"><g fill="none" stroke="#cfcccf" stroke-width="1"><rect x="0.5" y="0.5" width="11.5" height="6.5" rx="1.2"/><line x1="0.5" y1="9.5" x2="12" y2="9.5" stroke-dasharray="2 1.2"/></g></svg>
<svg style="left:973px;top:469.5px" width="23" height="11" viewBox="0 0 23 11"><g fill="none" stroke="#cfcccf" stroke-width="1"><rect x="0.5" y="0.5" width="3" height="2.6" rx="0.5"/><rect x="4.5" y="0.5" width="3" height="2.6" rx="0.5"/><rect x="8.5" y="0.5" width="3" height="2.6" rx="0.5"/><rect x="0.5" y="4.2" width="3" height="2.6" rx="0.5"/><rect x="4.5" y="4.2" width="3" height="2.6" rx="0.5"/><rect x="8.5" y="4.2" width="3" height="2.6" rx="0.5"/><rect x="0.5" y="7.9" width="3" height="2.6" rx="0.5"/><rect x="4.5" y="7.9" width="3" height="2.6" rx="0.5"/><rect x="8.5" y="7.9" width="3" height="2.6" rx="0.5"/><path d="M16.5 4.5L19 7L21.5 4.5" stroke-width="1.2"/></g></svg>
<svg style="left:1009px;top:468.5px" width="10" height="12" viewBox="0 0 10 12"><g fill="none" stroke="#555255" stroke-width="1"><path d="M3 4.5H1V11.5H9V4.5H7"/><path d="M5 7.5V0.8M3 2.6L5 0.6L7 2.6"/></g></svg>
<svg style="left:1032.5px;top:469.5px" width="12" height="11" viewBox="0 0 12 11"><path d="M0.8 6.2L5.8 1.2H10.4Q11.2 1.2 11.2 2V5.6L6.2 10.4Z" fill="none" stroke="#555255" stroke-width="1" stroke-linejoin="round"/></svg>
<svg style="left:1059px;top:469.5px" width="22" height="11" viewBox="0 0 22 11"><g fill="none" stroke="#cfcccf" stroke-width="1"><circle cx="5.6" cy="5.5" r="5"/><path d="M15.5 4.5L18 7L20.5 4.5" stroke-width="1.2"/></g><g fill="#cfcccf"><circle cx="3.2" cy="5.5" r="0.8"/><circle cx="5.6" cy="5.5" r="0.8"/><circle cx="8" cy="5.5" r="0.8"/></g></svg>
<svg style="left:1115px;top:470px" width="10" height="10" viewBox="0 0 10 10"><g fill="none" stroke="#8e8b8e" stroke-width="1.1"><circle cx="4" cy="4" r="3.2"/><line x1="6.4" y1="6.4" x2="9.4" y2="9.4"/></g></svg>
<div class="t" style="left:1130px;top:469px;font-size:8px;letter-spacing:-0.1px;color:#5e5b5e">Search</div>
<svg style="left:615px;top:527px" width="151" height="129" viewBox="0 0 151 129"><defs><linearGradient id="gb0" x1="0" y1="0" x2="0" y2="1"><stop offset="0" stop-color="#2eaaf0"/><stop offset="1" stop-color="#1a8cd8"/></linearGradient></defs><path d="M0 9Q0 0.5 8.5 0.5H44Q49 0.5 53 4.5L58 9.5Q62 13 67 13H141Q150.500 13 150.500 22V60H0Z" fill="url(#gb0)"/><path d="M0 30Q0 22.500 7.500 22.500H143Q150.500 22.500 150.500 30V119Q150.500 128 141.500 128H9Q0 128 0 119Z" fill="#5fc9fb"/><path d="M0 115H150.500V119Q150.500 128 141.500 128H9Q0 128 0 119Z" fill="#48b8f5"/><rect x="0" y="114.500" width="150.500" height="1" fill="#7ad4fc" opacity="0.6"/></svg>
<svg style="left:804px;top:527px" width="151" height="129" viewBox="0 0 151 129"><defs><linearGradient id="gb1" x1="0" y1="0" x2="0" y2="1"><stop offset="0" stop-color="#2eaaf0"/><stop offset="1" stop-color="#1a8cd8"/></linearGradient></defs><path d="M0 9Q0 0.5 8.5 0.5H44Q49 0.5 53 4.5L58 9.5Q62 13 67 13H141Q150.500 13 150.500 22V60H0Z" fill="url(#gb1)"/><path d="M0 30Q0 22.500 7.500 22.500H143Q150.500 22.500 150.500 30V119Q150.500 128 141.500 128H9Q0 128 0 119Z" fill="#5fc9fb"/><path d="M0 115H150.500V119Q150.500 128 141.500 128H9Q0 128 0 119Z" fill="#48b8f5"/><rect x="0" y="114.500" width="150.500" height="1" fill="#7ad4fc" opacity="0.6"/></svg>
<svg style="left:992px;top:527px" width="151" height="129" viewBox="0 0 151 129"><defs><linearGradient id="gb2" x1="0" y1="0" x2="0" y2="1"><stop offset="0" stop-color="#2eaaf0"/><stop offset="1" stop-color="#1a8cd8"/></linearGradient></defs><path d="M0 9Q0 0.5 8.5 0.5H44Q49 0.5 53 4.5L58 9.5Q62 13 67 13H141Q150.500 13 150.500 22V60H0Z" fill="url(#gb2)"/><path d="M0 30Q0 22.500 7.500 22.500H143Q150.500 22.500 150.500 30V119Q150.500 128 141.500 128H9Q0 128 0 119Z" fill="#5fc9fb"/><path d="M0 115H150.500V119Q150.500 128 141.500 128H9Q0 128 0 119Z" fill="#48b8f5"/><rect x="0" y="114.500" width="150.500" height="1" fill="#7ad4fc" opacity="0.6"/></svg>
<div class="a" style="left:671.8px;top:685.2px;width:6px;height:6px;border-radius:50%;background:#3a8af0"></div>
<div class="t" style="left:682px;top:680.8px;font-size:7.5px;font-weight:bold;-webkit-text-stroke:0;letter-spacing:0;color:#dcdadc">Archive</div>
<div class="a" style="left:846.2px;top:685.2px;width:6px;height:6px;border-radius:50%;background:#f0605c"></div>
<div class="t" style="left:857px;top:680.8px;font-size:7.5px;font-weight:bold;-webkit-text-stroke:0;letter-spacing:0;color:#dcdadc">Final Deliveries</div>
<div class="a" style="left:1032.3px;top:685.2px;width:6px;height:6px;border-radius:50%;background:#4cc85a"></div>
<div class="t" style="left:1042.5px;top:680.8px;font-size:7.5px;font-weight:bold;-webkit-text-stroke:0;letter-spacing:0;color:#dcdadc">On Set Workflow</div>
<svg style="left:598px;top:762px" width="8" height="7" viewBox="0 0 8 7"><path d="M1 0H7L8 5V7H0V5Z" fill="#d8d6d8"/></svg>
<div class="t" style="left:609px;top:759px;font-size:7.5px;letter-spacing:-0.1px;color:#8a878a">Big Sur</div>
<div class="t" style="left:636px;top:759px;font-size:7.5px;letter-spacing:-0.1px;color:#8a878a">›</div>
<svg style="left:643px;top:762px" width="8" height="7" viewBox="0 0 8 7"><path d="M0 0.8Q0 0 0.8 0H2.8L3.6 0.9H7.2Q8 0.9 8 1.7V6.2Q8 7 7.2 7H0.800Q0 7 0 6.2Z" fill="#2b9af0"/></svg>
<div class="t" style="left:654px;top:759px;font-size:7.5px;letter-spacing:-0.1px;color:#8a878a">Users</div>
<div class="t" style="left:677px;top:759px;font-size:7.5px;letter-spacing:-0.1px;color:#8a878a">›</div>
<svg style="left:684px;top:762px" width="8" height="7" viewBox="0 0 8 7"><path d="M0 0.8Q0 0 0.8 0H2.8L3.6 0.9H7.2Q8 0.9 8 1.7V6.2Q8 7 7.2 7H0.800Q0 7 0 6.2Z" fill="#2b9af0"/></svg>
<div class="t" style="left:695px;top:759px;font-size:7.5px;letter-spacing:-0.1px;color:#8a878a">Documents</div>
<div class="t" style="left:736px;top:759px;font-size:7.5px;letter-spacing:-0.1px;color:#8a878a">›</div>
<svg style="left:743px;top:762px" width="8" height="7" viewBox="0 0 8 7"><path d="M0 0.8Q0 0 0.8 0H2.8L3.6 0.9H7.2Q8 0.9 8 1.7V6.2Q8 7 7.2 7H0.800Q0 7 0 6.2Z" fill="#2b9af0"/></svg>
<div class="t" style="left:753.5px;top:759px;font-size:7.5px;letter-spacing:-0.1px;color:#8a878a">Watch Folders</div>
<div class="a" style="left:15px;top:15px;width:200px;height:140px;overflow:hidden"><div class="a" style="left:-59.4px;top:22.8px;width:260px;height:35px;background:#dd3a58;transform:rotate(-34.5deg);transform-origin:50% 50%;text-align:center;line-height:35px;font-family:'Liberation Serif',serif;font-weight:bold;font-size:17.1px;letter-spacing:0;color:#a2eea8"><span style="position:relative;left:-10.5px;top:-0.5px">www.aplboda.com</span></div></div>
<div class="a" style="left:1128px;top:784.5px;width:167px;height:27.5px;background:#dd3a58;text-align:center;line-height:27px;font-family:'Liberation Serif',serif;font-weight:bold;font-size:19.1px;letter-spacing:0;color:#a2eea8">www.aplboda.com</div>
</div>
</body></html>
